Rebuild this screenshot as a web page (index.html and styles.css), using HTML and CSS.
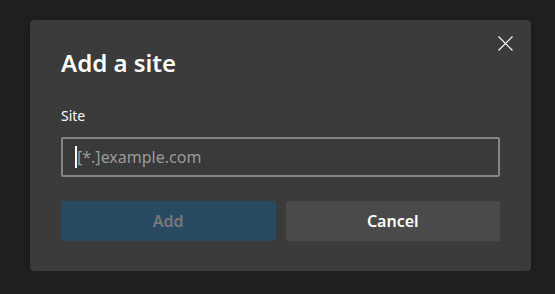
FILE: index.html
```html
<!DOCTYPE html>
<html lang="en">
<head>
    <meta charset="UTF-8">
    <meta name="viewport" content="width=device-width, initial-scale=1.0">
    <title>Add a site</title>
    <link rel="stylesheet" href="styles.css">
</head>
<body>
    <div class="dialog">
        <button class="close" aria-label="Close">
            <svg width="15" height="15" viewBox="0 0 15 15">
                <path d="M0.5 0.5 L14.5 14.5 M14.5 0.5 L0.5 14.5" stroke="#fff" stroke-width="1.2" fill="none"/>
            </svg>
        </button>
        <h2 class="title">Add a site</h2>
        <label class="label" for="site">Site</label>
        <div class="field">
            <span class="caret"></span>
            <input type="text" id="site" placeholder="[*.]example.com">
        </div>
        <div class="actions">
            <button class="btn primary" disabled>Add</button>
            <button class="btn">Cancel</button>
        </div>
    </div>
</body>
</html>
```

FILE: styles.css
```css
body {
    margin: 0;
    background: #202020;
    font-family: "Noto Sans", "Open Sans", sans-serif;
    color: #fff;
}
.dialog {
    position: relative;
    box-sizing: border-box;
    width: 501px;
    margin: 20px 0 0 30px;
    padding: 27px 31px 30px 31px;
    background: #3b3b3b;
    border-radius: 4px;
    box-shadow: 0 2px 10px rgba(0, 0, 0, 0.3);
}
.close {
    position: absolute;
    top: 6px;
    right: 9px;
    width: 34px;
    height: 34px;
    padding: 0;
    border: none;
    background: none;
    display: flex;
    align-items: center;
    justify-content: center;
}
.title {
    margin: 0;
    font-size: 24px;
    font-weight: 600;
    line-height: 32px;
}
.label {
    display: block;
    margin-top: 27px;
    font-size: 14px;
    line-height: 20px;
}
.field {
    position: relative;
    margin-top: 11px;
}
.field input {
    box-sizing: border-box;
    width: 100%;
    height: 40px;
    padding: 0 14px;
    border: 2px solid #858585;
    border-radius: 2px;
    background: #3a3a3a;
    color: #fff;
    font-family: inherit;
    font-size: 16px;
    outline: none;
}
.field input::placeholder {
    color: #9a9a9a;
}
.caret {
    position: absolute;
    left: 14px;
    top: 9px;
    width: 2px;
    height: 22px;
    background: #fff;
}
.actions {
    display: flex;
    gap: 10px;
    margin-top: 24px;
}
.btn {
    flex: 1;
    height: 40px;
    border: none;
    border-radius: 2px;
    background: #4a4a4a;
    color: #fff;
    font-family: inherit;
    font-size: 16px;
    font-weight: 600;
}
.btn.primary {
    background: #294a63;
    color: #787878;
}
```
